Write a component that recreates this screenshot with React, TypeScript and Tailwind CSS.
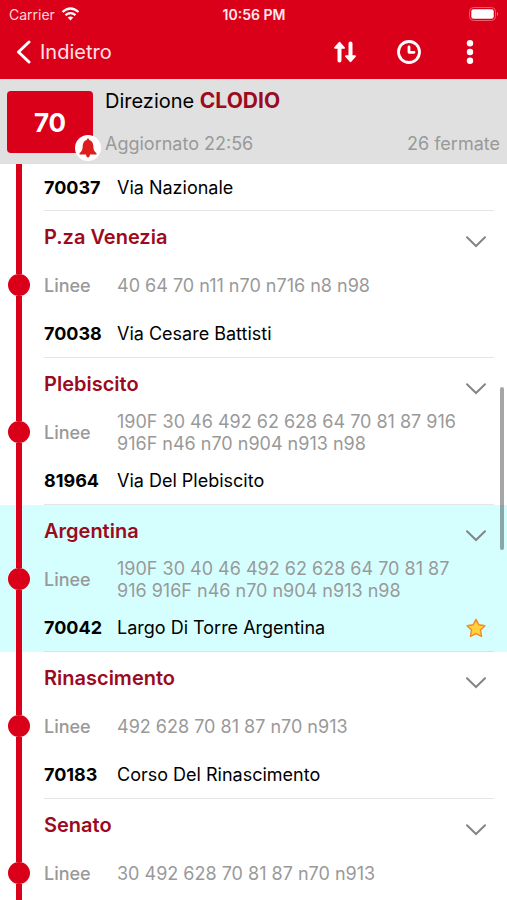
type Stop = {
  name: string;
  lines: string;
  code?: string;
  street?: string;
  active?: boolean;
};

const stops: Stop[] = [
  { name: "P.za Venezia", lines: "40 64 70 n11 n70 n716 n8 n98", code: "70038", street: "Via Cesare Battisti" },
  {
    name: "Plebiscito",
    lines: "190F 30 46 492 62 628 64 70 81 87 916 916F n46 n70 n904 n913 n98",
    code: "81964",
    street: "Via Del Plebiscito",
  },
  {
    name: "Argentina",
    lines: "190F 30 40 46 492 62 628 64 70 81 87 916 916F n46 n70 n904 n913 n98",
    code: "70042",
    street: "Largo Di Torre Argentina",
    active: true,
  },
  { name: "Rinascimento", lines: "492 628 70 81 87 n70 n913", code: "70183", street: "Corso Del Rinascimento" },
  { name: "Senato", lines: "30 492 628 70 81 87 n70 n913" },
];

function StatusBar() {
  return (
    <div className="grid h-7 grid-cols-3 items-center pl-[9px] pr-2 text-[14px]">
      <div className="flex items-center gap-[6px]">
        <span className="text-[#ffd5d8]">Carrier</span>
        <svg width="19" height="14" viewBox="0 0 18 14" fill="none" stroke="#fff" strokeWidth="2.3" aria-hidden="true">
          <path d="M1 5Q9 -2 17 5" />
          <path d="M4 8.2Q9 4 14 8.2" />
          <path d="M6.2 10.6Q9 8.2 11.8 10.6L9 13.6Z" fill="#fff" stroke="none" />
        </svg>
      </div>
      <span className="text-center font-semibold text-[#ffeaec]">10:56 PM</span>
      <svg className="justify-self-end" width="30" height="14" viewBox="0 0 30 14" aria-hidden="true">
        <rect x="0.5" y="0.5" width="26" height="13" rx="4" fill="none" stroke="#ee5f6c" />
        <rect x="2.3" y="2.3" width="22.4" height="9.4" rx="2.2" fill="#fff" />
        <path d="M28 5Q30 7 28 9Z" fill="#f2808a" />
      </svg>
    </div>
  );
}

function NavBar() {
  return (
    <nav className="flex h-12 items-center justify-between pl-4 pr-6">
      <button className="flex items-center gap-[9px] text-[20px] text-[#ffe3e5]">
        <svg width="15" height="24" viewBox="0 0 15 24" fill="none" stroke="#fff" strokeWidth="3" strokeLinecap="round" strokeLinejoin="round" aria-hidden="true">
          <path d="M13 2L2.5 12L13 22" />
        </svg>
        Indietro
      </button>
      <div className="flex items-center">
        <button aria-label="Inverti direzione" className="mr-10">
          <svg width="24" height="22" viewBox="0 0 24 22" fill="#fff" stroke="#fff" strokeLinejoin="round" strokeLinecap="round" aria-hidden="true">
            <path d="M6.5 19.5V6M17.5 2.5V16" strokeWidth="4" fill="none" />
            <path d="M6.5 1.8L11 6.8H2Z" strokeWidth="2" />
            <path d="M17.5 20.2L22 15.2H13Z" strokeWidth="2" />
          </svg>
        </button>
        <button aria-label="Orari" className="mr-[45px]">
          <svg width="24" height="24" viewBox="0 0 24 24" fill="none" stroke="#fff" aria-hidden="true">
            <circle cx="12" cy="12" r="10.5" strokeWidth="2.8" />
            <path d="M12 7V12.3H17" strokeWidth="2.8" strokeLinecap="round" strokeLinejoin="round" />
          </svg>
        </button>
        <button aria-label="Altro" className="mr-[9px]">
          <svg width="8" height="24" viewBox="0 0 8 24" fill="#fff" aria-hidden="true">
            <circle cx="4" cy="3.2" r="3.2" />
            <circle cx="4" cy="12" r="3.2" />
            <circle cx="4" cy="20.8" r="3.2" />
          </svg>
        </button>
      </div>
    </nav>
  );
}

function LineHeader() {
  return (
    <section className="flex h-[85px] shrink-0 bg-[#e0e0e0] px-[7px]">
      <div className="relative mt-3 flex h-[62px] w-[86px] items-center justify-center rounded bg-[#da0019] text-[26px] font-bold text-white">
        70
        <button aria-label="Notifiche" className="absolute -bottom-2 -right-2 flex h-[26px] w-[26px] items-center justify-center rounded-full bg-white">
          <svg width="18" height="20" viewBox="0 0 18 20" fill="#dd1e1c" aria-hidden="true">
            <path d="M9 .5C9.8.5 10.2 1 10.2 2C13 2.7 14.2 5 14.3 8C14.4 11.5 15 13.5 17.5 15.2V16.5H.5V15.2C3 13.5 3.6 11.5 3.7 8C3.8 5 5 2.7 7.8 2C7.8 1 8.2.5 9 .5Z" />
            <path d="M7 16H11Q10.7 19.5 9 19.5Q7.3 19.5 7 16Z" />
          </svg>
        </button>
      </div>
      <div className="ml-3 flex flex-1 flex-col justify-between pb-2 pt-2">
        <h1 className="text-[20px] leading-7 text-black">
          Direzione <strong className="text-[21px] font-bold text-[#9c0a1e]">CLODIO</strong>
        </h1>
        <div className="flex justify-between text-[18px] leading-6 text-[#999]">
          <span>Aggiornato 22:56</span>
          <span>26 fermate</span>
        </div>
      </div>
    </section>
  );
}

function StreetRow({ code, street }: { code: string; street: string }) {
  return (
    <>
      <span className="w-[73px] shrink-0 font-bold">{code}</span>
      <span>{street}</span>
    </>
  );
}

function StopItem({ stop }: { stop: Stop }) {
  return (
    <li className={stop.active ? "flex h-[147px] shrink-0 bg-[#d5ffff] pl-2" : "flex h-[147px] shrink-0 pl-2"}>
      <div className="flex w-[22px] shrink-0 flex-col items-center">
        <div className="w-[6px] flex-1 bg-[#da0019]" />
        <div className="h-[22px] w-[22px] rounded-full bg-[#da0019]" />
        <div className="w-[6px] flex-1 bg-[#da0019]" />
      </div>
      <div className={stop.active ? "ml-[14px] mr-[13px] flex-1 border-b border-[#cfe6e6] pt-px" : "ml-[14px] mr-[13px] flex-1 border-b border-[#e6e6e6] pt-px"}>
        <div className="flex h-[49px] items-center justify-between pr-2">
          <h2 className="text-[20px] font-semibold text-[#9c0a1e]">{stop.name}</h2>
          <button aria-label={"Espandi " + stop.name} className="mt-[10px]">
            <svg width="20" height="12" viewBox="0 0 20 12" fill="none" stroke="#858585" strokeWidth="2" strokeLinecap="round" aria-hidden="true">
              <path d="M1 1.3L10 10L19 1.3" />
            </svg>
          </button>
        </div>
        <div className="flex h-[49px] items-center text-[18px] leading-[22px] text-[#999]">
          <span className="w-[73px] shrink-0 font-medium">Linee</span>
          <span className="mr-6">{stop.lines}</span>
        </div>
        {stop.code && stop.street && (
          <div className="flex h-[47px] items-center pr-2 text-[18px] text-black">
            <StreetRow code={stop.code} street={stop.street} />
            {stop.active && (
              <button aria-label="Preferito" className="ml-auto">
                <svg width="20" height="20" viewBox="0 0 20 20" fill="#ffd23c" stroke="#f58a2c" strokeWidth="1.5" strokeLinejoin="round" aria-hidden="true">
                  <path d="M10 1.3L12.7 6.7L18.9 7.7L14.5 12L15.5 18.4L10 15.6L4.5 18.4L5.5 12L1.1 7.7L7.3 6.7Z" />
                </svg>
              </button>
            )}
          </div>
        )}
      </div>
    </li>
  );
}

export default function App() {
  return (
    <div className="flex h-screen flex-col overflow-hidden bg-white font-['Inter',sans-serif]">
      <header className="shrink-0 bg-[#da0019] pb-[3px]">
        <StatusBar />
        <NavBar />
      </header>
      <LineHeader />
      <main className="relative flex-1 overflow-hidden">
        <ul className="flex flex-col">
          <li className="flex h-[47px] shrink-0 pl-2">
            <div className="mx-2 w-[6px] shrink-0 bg-[#da0019]" />
            <div className="ml-[14px] mr-[13px] flex flex-1 items-center border-b border-[#e6e6e6] text-[18px] text-black">
              <StreetRow code="70037" street="Via Nazionale" />
            </div>
          </li>
          {stops.map((stop) => (
            <StopItem key={stop.name} stop={stop} />
          ))}
        </ul>
        <div className="absolute right-[3px] top-[223px] h-[163px] w-1 rounded-full bg-black/35" />
      </main>
    </div>
  );
}
